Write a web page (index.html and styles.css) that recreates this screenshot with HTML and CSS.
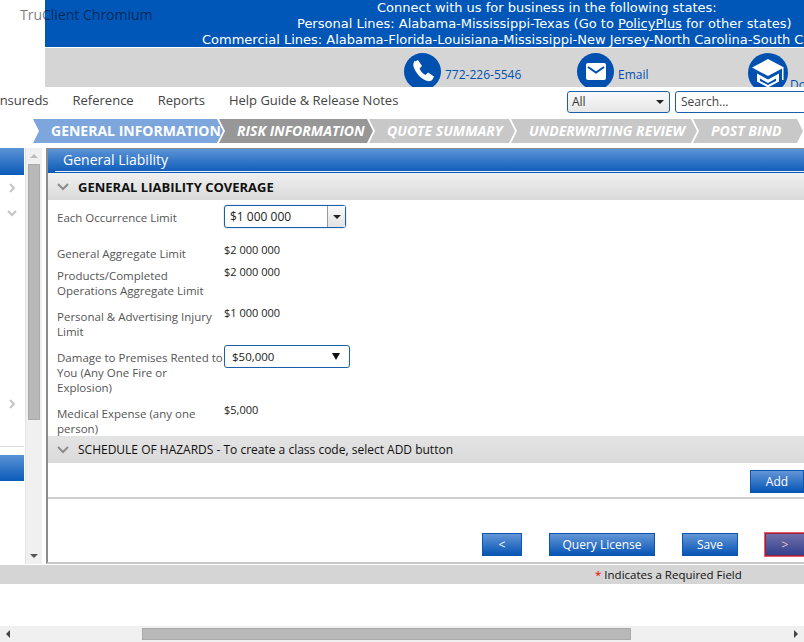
FILE: index.html

```html
<!DOCTYPE html>
<html lang="en">
<head>
  <meta charset="UTF-8">
  <meta name="viewport" content="width=device-width, initial-scale=1.0">
  <title>General Liability</title>
  <link rel="stylesheet" href="styles.css">
</head>
<body>
  <div class="app-title">TruClient Chromium</div>

  <div class="banner">
    <div class="banner-line">Connect with us for business in the following states:</div>
    <div class="banner-line">Personal Lines: Alabama-Mississippi-Texas (Go to <u>PolicyPlus</u> for other states)</div>
    <div class="banner-line">Commercial Lines: Alabama-Florida-Louisiana-Mississippi-New Jersey-North Carolina-South Carolina-Texas</div>
  </div>

  <div class="contact-bar">
    <div class="contact contact-phone">
      <span class="contact-icon">
        <svg width="37" height="37" viewBox="0 0 37 37"><path fill="#fff" d="M11 8.500l3-1.500 4 6-2.500 2.500c1 2.500 3 5 6 6.500l2.500-2.500 6 4-1.500 3c-1 1.500-3 2-5 1.500-6-1.500-12-8-14-14.500-.5-2.500 0-4.500 1.500-6z"/></svg>
      </span>
      <span>772-226-5546</span>
    </div>
    <div class="contact contact-mail">
      <span class="contact-icon">
        <svg width="37" height="37" viewBox="0 0 37 37"><rect x="9" y="10" width="20" height="17" rx="2" fill="#fff"/><path d="M11 14l8 5.500 8-5.500" fill="none" stroke="#0050b0" stroke-width="2"/></svg>
      </span>
      <span>Email</span>
    </div>
    <div class="contact contact-learn">
      <span class="contact-icon contact-icon-lg">
        <svg width="40" height="40" viewBox="0 0 40 40"><path fill="#fff" d="M20 6l16 8.500-16 8.500-16-8.500z"/><path fill="#fff" d="M9 20.500l11 6 11-6v8l-11 6-11-6z"/><path fill="#0050b0" d="M12 25.500l8 4.500 8-4.500v2.500l-8 4-8-4z"/><rect x="34" y="15" width="1.500" height="12" fill="#fff"/></svg>
      </span>
      <span class="contact-clip">Documents</span>
    </div>
  </div>

  <div class="nav-row">
    <nav class="nav-links">
      <span>Insureds</span>
      <span>Reference</span>
      <span>Reports</span>
      <span>Help Guide &amp; Release Notes</span>
    </nav>
    <div class="search-scope">All<span class="arrow-down"></span></div>
    <div class="search-box">Search...</div>
  </div>

  <div class="steps">
    <div class="step step-active">GENERAL INFORMATION</div>
    <div class="step step-done">RISK INFORMATION</div>
    <div class="step step-q">QUOTE SUMMARY</div>
    <div class="step step-u">UNDERWRITING REVIEW</div>
    <div class="step step-p">POST BIND</div>
  </div>

  <div class="workspace">
    <aside class="sidebar">
      <div class="side-box">
        <div class="side-head"></div>
        <div class="side-chevron side-chevron-1"><svg width="10" height="10" viewBox="0 0 10 10"><path d="M3 1l4 4-4 4" fill="none" stroke="#c4c4c4" stroke-width="2"/></svg></div>
        <div class="side-chevron side-chevron-2"><svg width="10" height="10" viewBox="0 0 10 10"><path d="M1 3l4 4 4-4" fill="none" stroke="#c4c4c4" stroke-width="2"/></svg></div>
        <div class="side-chevron side-chevron-3"><svg width="10" height="10" viewBox="0 0 10 10"><path d="M3 1l4 4-4 4" fill="none" stroke="#c4c4c4" stroke-width="2"/></svg></div>
      </div>
      <div class="side-head side-head-2"></div>
    </aside>

    <div class="vscroll">
      <span class="scroll-up"></span>
      <span class="vthumb"></span>
      <span class="scroll-down"></span>
    </div>

    <main class="panel">
      <div class="panel-title"><span>General Liability</span></div>
      <div class="section-head section-main">
        <svg width="12" height="8" viewBox="0 0 12 8"><path d="M1 1l5 5 5-5" fill="none" stroke="#8c8c8c" stroke-width="2"/></svg>
        <span>GENERAL LIABILITY COVERAGE</span>
      </div>

      <div class="form">
        <div class="form-row row-occ">
          <label>Each Occurrence Limit</label>
          <div class="combo"><span class="combo-text">$1 000 000</span><span class="combo-btn"><span class="arrow-down"></span></span></div>
        </div>
        <div class="form-row row-agg">
          <label>General Aggregate Limit</label>
          <div class="value">$2 000 000</div>
        </div>
        <div class="form-row row-prod">
          <label>Products/Completed Operations Aggregate Limit</label>
          <div class="value">$2 000 000</div>
        </div>
        <div class="form-row row-adv">
          <label>Personal &amp; Advertising Injury Limit</label>
          <div class="value">$1 000 000</div>
        </div>
        <div class="form-row row-dmg">
          <label>Damage to Premises Rented to You (Any One Fire or Explosion)</label>
          <div class="plain-select">$50,000<span class="arrow-solid"></span></div>
        </div>
        <div class="form-row row-med">
          <label>Medical Expense (any one person)</label>
          <div class="value">$5,000</div>
        </div>
      </div>

      <div class="section-head section-sub">
        <svg width="12" height="8" viewBox="0 0 12 8"><path d="M1 1l5 5 5-5" fill="none" stroke="#8c8c8c" stroke-width="2"/></svg>
        <span>SCHEDULE OF HAZARDS - To create a class code, select ADD button</span>
      </div>

      <div class="add-row"><button class="btn btn-add">Add</button></div>

      <div class="action-row">
        <button class="btn btn-prev">&lt;</button>
        <button class="btn btn-query">Query License</button>
        <button class="btn btn-save">Save</button>
        <button class="btn btn-next">&gt;</button>
      </div>
    </main>
  </div>

  <div class="required-bar"><span class="star">*</span> Indicates a Required Field</div>

  <div class="hscroll">
    <span class="scroll-left"></span>
    <span class="hthumb"></span>
    <span class="scroll-right"></span>
  </div>
</body>
</html>
```

FILE: styles.css

```css
html, body { margin: 0; padding: 0; }
body { width: 804px; height: 642px; overflow: hidden; position: relative; background: #fff; font-family: "Open Sans", sans-serif; font-size: 12px; color: #444; }

.app-title { position: absolute; left: 20px; top: 5px; font-family: "Open Sans", sans-serif; font-size: 14px; line-height: 20px; color: rgba(0, 0, 0, 0.55); }

.banner { margin-left: 45px; height: 47px; background: #0057b8; color: #fff; font-family: "DejaVu Sans", sans-serif; font-size: 13px; line-height: 16px; overflow: hidden; white-space: nowrap; }
.banner-line:nth-child(1) { padding-left: 332px; }
.banner-line:nth-child(2) { padding-left: 252px; }
.banner-line:nth-child(3) { padding-left: 157px; }

.contact-bar { margin: 1px 0 0 45px; height: 39px; background: #d5d5d5; display: flex; overflow: hidden; color: #0050b0; }
.contact { display: flex; flex: none; align-items: flex-start; padding-top: 5px; }
.contact > span:last-child { margin: 14px 0 0 4px; font-size: 12px; line-height: 16px; }
.contact-phone { width: 173px; margin-left: 359px; }
.contact-mail { width: 171px; }
.contact-icon { width: 37px; height: 37px; border-radius: 50%; background: #0050b0; flex: none; }
.contact-icon-lg { width: 40px; height: 40px; }
.contact-icon svg { display: block; }
.contact > span.contact-clip { margin: 24px 0 0 2px; }

.nav-row { height: 31px; display: flex; white-space: nowrap; overflow: hidden; }
.nav-links { margin-left: -4px; width: 571px; flex: none; display: flex; gap: 24px; font-size: 13px; line-height: 26px; color: #444; }
.search-scope { width: 97px; height: 20px; flex: none; margin-top: 4px; padding-left: 4px; border: 1px solid #1a5fa8; border-radius: 3px; background: linear-gradient(#fafafa, #e6e6e6); line-height: 20px; color: #333; display: flex; justify-content: space-between; align-items: center; box-sizing: content-box; }
.search-scope .arrow-down { margin-right: 5px; }
.search-box { width: 140px; height: 20px; flex: none; margin: 4px 0 0 5px; padding-left: 5px; border: 1px solid #1a5fa8; border-radius: 3px; line-height: 20px; color: #444; }
.arrow-down { display: block; width: 0; height: 0; border: 4px solid transparent; border-top: 4px solid #222; border-bottom: 0; }

.steps { height: 24px; margin-top: 1px; display: flex; padding-left: 33px; white-space: nowrap; overflow: hidden; }
.step { flex: none; height: 24px; margin-right: -4px; box-sizing: border-box; font-family: "Open Sans", sans-serif; font-size: 14px; font-weight: 700; font-style: italic; line-height: 24px; color: #fff; background: #c8c8c8; clip-path: polygon(0 0, calc(100% - 6px) 0, 100% 50%, calc(100% - 6px) 100%, 0 100%, 6px 50%); }
.step-active { width: 190px; padding-left: 18px; background: #7da7dc; font-style: normal; }
.step-done { width: 154px; padding-left: 18px; background: #979797; }
.step-q { width: 146px; padding-left: 18px; }
.step-u { width: 186px; padding-left: 18px; }
.step-p { width: 110px; padding-left: 18px; }

.workspace { margin-top: 5px; height: 416px; display: flex; overflow: hidden; }
.sidebar { width: 24px; flex: none; }
.side-box { height: 298px; border-bottom: 1px solid #d8d8d8; margin-bottom: 8px; }
.side-head { height: 27px; background: linear-gradient(#5b93d6, #0a5ab8); }
.side-head-2 { height: 26px; }
.side-chevron { height: 10px; padding-left: 7px; }
.side-chevron svg { display: block; }
.side-chevron-1 { margin-top: 8px; }
.side-chevron-2 { margin-top: 15px; }
.side-chevron-3 { margin-top: 181px; }

.vscroll { width: 16px; flex: none; margin-left: 1px; margin-right: 4px; background: #f0f0f0; display: flex; flex-direction: column; align-items: center; border-left: 1px solid #e4e4e4; }
.scroll-up { width: 0; height: 0; margin-top: 6px; border: 4px solid transparent; border-bottom: 4px solid #bbb; border-top: 0; }
.vthumb { width: 12px; height: 256px; margin-top: 6px; background: #b8b8b8; border: 1px solid #aaa; box-sizing: border-box; }
.scroll-down { width: 0; height: 0; margin-top: auto; margin-bottom: 6px; border: 4px solid transparent; border-top: 4px solid #555; border-bottom: 0; }

.panel { flex: 1; min-width: 0; border-left: 2px solid #8c8c8c; border-top: 1px solid #8c8c8c; border-bottom: 2px solid #c8c8c8; display: flex; flex-direction: column; }
.panel-title { height: 24px; background: linear-gradient(#5b93d6, #0a5ab8); color: #fff; font-size: 14px; line-height: 22px; padding-left: 7px; box-sizing: border-box; }
.panel-title span { display: block; padding-left: 8px; height: 23px; border-bottom: 1px solid #e6eefb; box-sizing: border-box; }

.section-head { display: flex; align-items: center; gap: 9px; padding-left: 9px; background: linear-gradient(#f0f0f0, #dadada); color: #111; white-space: nowrap; overflow: hidden; }
.section-main { height: 27px; font-size: 13px; font-weight: 700; }
.section-sub { height: 27px; font-size: 12px; background: linear-gradient(#e4e4e4, #dadada); }

.form { height: 236px; padding: 7px 0 0 9px; box-sizing: border-box; }
.form-row { display: flex; }
.form-row label { width: 167px; flex: none; line-height: 15px; font-size: 11.500px; color: #555; }
.value { line-height: 15px; font-size: 11px; color: #222; margin-top: -4px; }
.row-occ { height: 30px; padding-top: 2px; box-sizing: border-box; }
.row-occ label { padding-top: 1px; }
.row-agg { height: 26px; padding-top: 9px; box-sizing: border-box; }
.row-prod { height: 41px; padding-top: 5px; box-sizing: border-box; }
.row-adv { height: 41px; padding-top: 5px; box-sizing: border-box; }
.row-dmg { height: 56px; padding-top: 5px; box-sizing: border-box; }
.row-med { height: 41px; padding-top: 5px; box-sizing: border-box; }
.row-agg { height: 26px; }

.combo { width: 120px; height: 21px; margin-top: -4px; display: flex; border: 1px solid #1a5fa8; border-radius: 3px; box-shadow: 0 0 1px #1a5fa8; color: #222; }
.combo-text { flex: 1; padding-left: 5px; line-height: 21px; font-size: 12px; }
.combo-btn { width: 17px; border-left: 1px solid #999; background: linear-gradient(#fafafa, #e2e2e2); display: flex; align-items: center; justify-content: center; }
.plain-select { width: 123px; height: 21px; margin-top: -5px; padding: 0 9px 0 7px; box-sizing: content-box; width: 108px; border: 1px solid #1a5fa8; border-radius: 3px; display: flex; justify-content: space-between; align-items: center; font-size: 11.500px; color: #222; }
.arrow-solid { width: 0; height: 0; border: 4px solid transparent; border-top: 7px solid #111; border-bottom: 0; }

.add-row { height: 36px; display: flex; justify-content: flex-end; align-items: flex-start; padding-top: 7px; box-sizing: content-box; border-bottom: 2px solid #d0d0d0; flex: none; height: 27px; }
.action-row { flex: 1; display: flex; align-items: flex-end; padding: 0 0 6px 434px; }
.btn { height: 23px; padding: 0; border: 1px solid #0a55ad; background: linear-gradient(#6496d6, #0655b6); color: #fff; font-family: "Open Sans", sans-serif; font-size: 12px; line-height: 19px; flex: none; }
.btn-add { width: 54px; }
.btn-prev { width: 40px; margin-right: 27px; }
.btn-query { width: 106px; margin-right: 27px; }
.btn-save { width: 56px; margin-right: 27px; }
.btn-next { width: 40px; background: linear-gradient(#6f6fa8, #33418f); color: #f0c0c8; box-shadow: 0 0 0 1px #e85a6a; border-color: #a02040; }

.required-bar { height: 19px; margin-top: 1px; background: #d5d5d5; padding-left: 595px; line-height: 19px; color: #111; font-size: 11.500px; white-space: nowrap; }
.star { color: #e00; }

.hscroll { position: absolute; left: 0; right: 0; bottom: 0; height: 16px; background: #f0f0f0; display: flex; align-items: center; }
.scroll-left { width: 0; height: 0; margin-left: 6px; border: 4px solid transparent; border-right: 4px solid #444; border-left: 0; }
.hthumb { width: 489px; height: 12px; margin-left: 132px; background: #b8b8b8; border: 1px solid #aaa; box-sizing: border-box; }
.scroll-right { width: 0; height: 0; margin-left: auto; margin-right: 6px; border: 4px solid transparent; border-left: 4px solid #444; border-right: 0; }
```
